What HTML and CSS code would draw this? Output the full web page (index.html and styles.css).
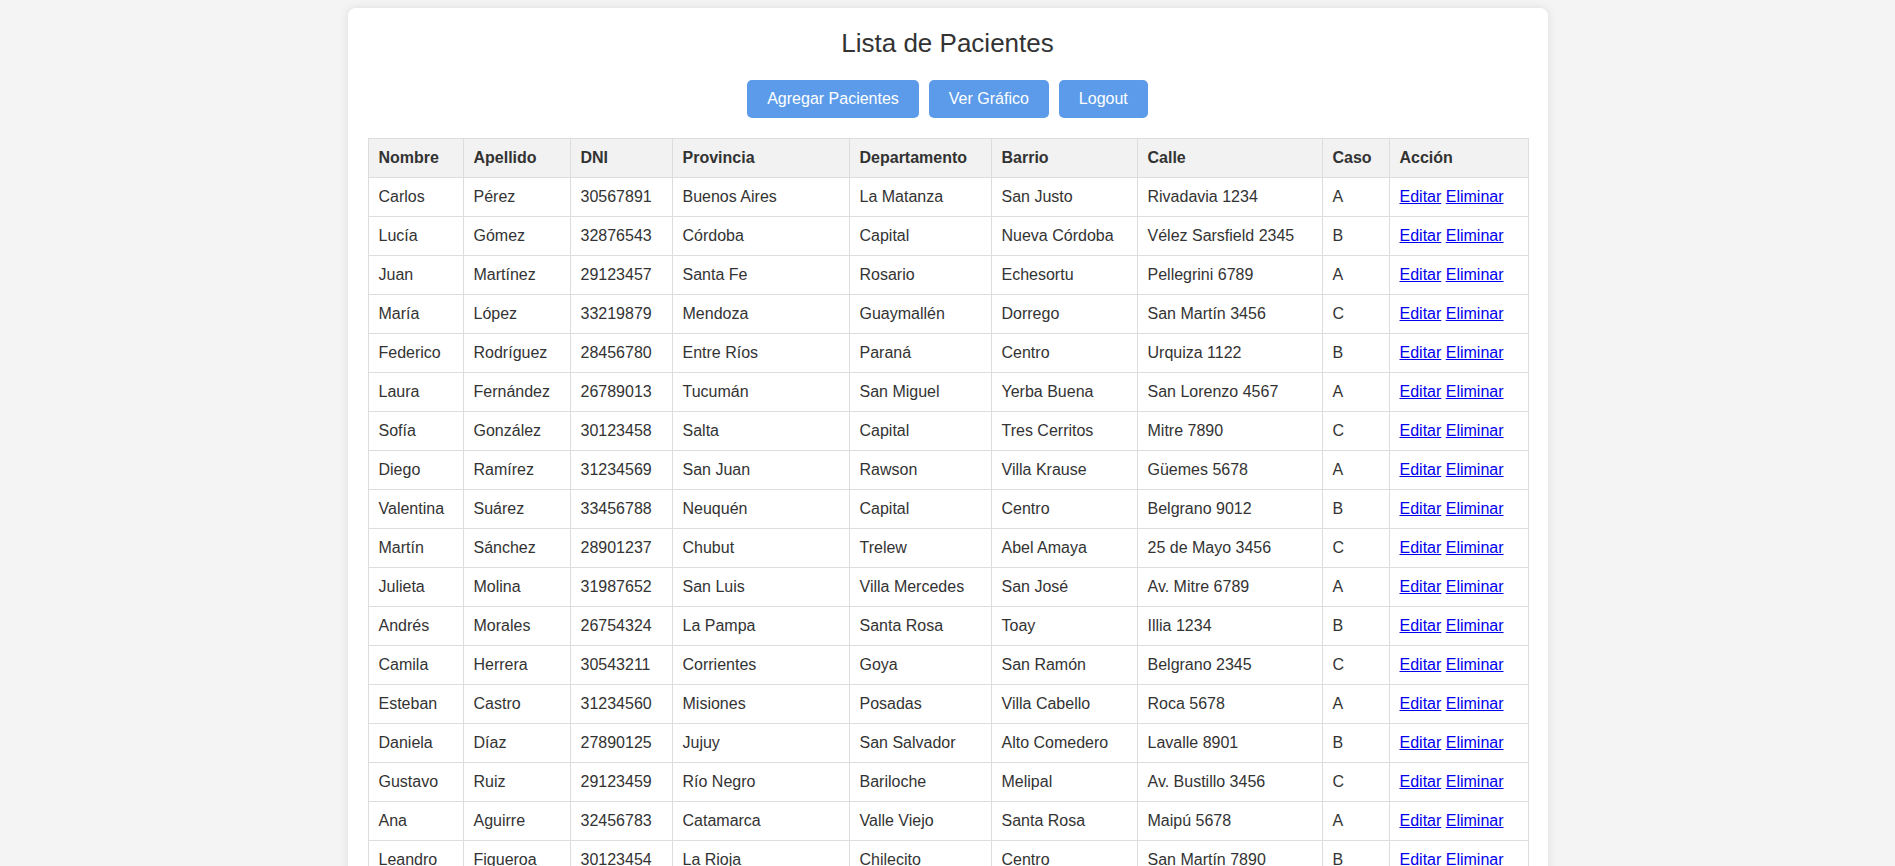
FILE: index.html
```html
<!DOCTYPE html>
<html lang="es">
<head>
<meta charset="utf-8">
<title>Lista de Pacientes</title>
<link rel="stylesheet" href="styles.css">
</head>
<body>
<div class="container">
  <h2 class="title">Lista de Pacientes</h2>
  <div class="actions">
    <button class="btn">Agregar Pacientes</button>
    <button class="btn">Ver Gráfico</button>
    <button class="btn">Logout</button>
  </div>
  <table class="patients">
    <colgroup>
      <col class="c-nombre"><col class="c-apellido"><col class="c-dni"><col class="c-prov"><col class="c-depto"><col class="c-barrio"><col class="c-calle"><col class="c-caso"><col class="c-accion">
    </colgroup>
    <thead>
      <tr><th>Nombre</th><th>Apellido</th><th>DNI</th><th>Provincia</th><th>Departamento</th><th>Barrio</th><th>Calle</th><th>Caso</th><th>Acción</th></tr>
    </thead>
    <tbody>
      <tr><td>Carlos</td><td>Pérez</td><td>30567891</td><td>Buenos Aires</td><td>La Matanza</td><td>San Justo</td><td>Rivadavia 1234</td><td>A</td><td><a href="#">Editar</a> <a href="#">Eliminar</a></td></tr>
      <tr><td>Lucía</td><td>Gómez</td><td>32876543</td><td>Córdoba</td><td>Capital</td><td>Nueva Córdoba</td><td>Vélez Sarsfield 2345</td><td>B</td><td><a href="#">Editar</a> <a href="#">Eliminar</a></td></tr>
      <tr><td>Juan</td><td>Martínez</td><td>29123457</td><td>Santa Fe</td><td>Rosario</td><td>Echesortu</td><td>Pellegrini 6789</td><td>A</td><td><a href="#">Editar</a> <a href="#">Eliminar</a></td></tr>
      <tr><td>María</td><td>López</td><td>33219879</td><td>Mendoza</td><td>Guaymallén</td><td>Dorrego</td><td>San Martín 3456</td><td>C</td><td><a href="#">Editar</a> <a href="#">Eliminar</a></td></tr>
      <tr><td>Federico</td><td>Rodríguez</td><td>28456780</td><td>Entre Ríos</td><td>Paraná</td><td>Centro</td><td>Urquiza 1122</td><td>B</td><td><a href="#">Editar</a> <a href="#">Eliminar</a></td></tr>
      <tr><td>Laura</td><td>Fernández</td><td>26789013</td><td>Tucumán</td><td>San Miguel</td><td>Yerba Buena</td><td>San Lorenzo 4567</td><td>A</td><td><a href="#">Editar</a> <a href="#">Eliminar</a></td></tr>
      <tr><td>Sofía</td><td>González</td><td>30123458</td><td>Salta</td><td>Capital</td><td>Tres Cerritos</td><td>Mitre 7890</td><td>C</td><td><a href="#">Editar</a> <a href="#">Eliminar</a></td></tr>
      <tr><td>Diego</td><td>Ramírez</td><td>31234569</td><td>San Juan</td><td>Rawson</td><td>Villa Krause</td><td>Güemes 5678</td><td>A</td><td><a href="#">Editar</a> <a href="#">Eliminar</a></td></tr>
      <tr><td>Valentina</td><td>Suárez</td><td>33456788</td><td>Neuquén</td><td>Capital</td><td>Centro</td><td>Belgrano 9012</td><td>B</td><td><a href="#">Editar</a> <a href="#">Eliminar</a></td></tr>
      <tr><td>Martín</td><td>Sánchez</td><td>28901237</td><td>Chubut</td><td>Trelew</td><td>Abel Amaya</td><td>25 de Mayo 3456</td><td>C</td><td><a href="#">Editar</a> <a href="#">Eliminar</a></td></tr>
      <tr><td>Julieta</td><td>Molina</td><td>31987652</td><td>San Luis</td><td>Villa Mercedes</td><td>San José</td><td>Av. Mitre 6789</td><td>A</td><td><a href="#">Editar</a> <a href="#">Eliminar</a></td></tr>
      <tr><td>Andrés</td><td>Morales</td><td>26754324</td><td>La Pampa</td><td>Santa Rosa</td><td>Toay</td><td>Illia 1234</td><td>B</td><td><a href="#">Editar</a> <a href="#">Eliminar</a></td></tr>
      <tr><td>Camila</td><td>Herrera</td><td>30543211</td><td>Corrientes</td><td>Goya</td><td>San Ramón</td><td>Belgrano 2345</td><td>C</td><td><a href="#">Editar</a> <a href="#">Eliminar</a></td></tr>
      <tr><td>Esteban</td><td>Castro</td><td>31234560</td><td>Misiones</td><td>Posadas</td><td>Villa Cabello</td><td>Roca 5678</td><td>A</td><td><a href="#">Editar</a> <a href="#">Eliminar</a></td></tr>
      <tr><td>Daniela</td><td>Díaz</td><td>27890125</td><td>Jujuy</td><td>San Salvador</td><td>Alto Comedero</td><td>Lavalle 8901</td><td>B</td><td><a href="#">Editar</a> <a href="#">Eliminar</a></td></tr>
      <tr><td>Gustavo</td><td>Ruiz</td><td>29123459</td><td>Río Negro</td><td>Bariloche</td><td>Melipal</td><td>Av. Bustillo 3456</td><td>C</td><td><a href="#">Editar</a> <a href="#">Eliminar</a></td></tr>
      <tr><td>Ana</td><td>Aguirre</td><td>32456783</td><td>Catamarca</td><td>Valle Viejo</td><td>Santa Rosa</td><td>Maipú 5678</td><td>A</td><td><a href="#">Editar</a> <a href="#">Eliminar</a></td></tr>
      <tr><td>Leandro</td><td>Figueroa</td><td>30123454</td><td>La Rioja</td><td>Chilecito</td><td>Centro</td><td>San Martín 7890</td><td>B</td><td><a href="#">Editar</a> <a href="#">Eliminar</a></td></tr>
    </tbody>
  </table>
</div>
</body>
</html>
```

FILE: styles.css
```css
html, body {
  margin: 0;
  padding: 0;
}

body {
  background: #f4f4f4;
  font-family: "Liberation Sans", Arial, sans-serif;
  color: #333;
  padding: 8px 0;
}

.container {
  width: 1200px;
  box-sizing: border-box;
  margin: 0 auto;
  padding: 20px;
  background: #fff;
  border-radius: 8px;
  box-shadow: 0 0 10px rgba(0, 0, 0, 0.1);
}

.title {
  margin: 0 0 21px;
  font-size: 26px;
  font-weight: normal;
  text-align: center;
  color: #333;
}

.actions {
  display: flex;
  justify-content: center;
  gap: 10px;
  margin-bottom: 20px;
}

.btn {
  font-family: "Liberation Sans", Arial, sans-serif;
  font-size: 16px;
  color: #fff;
  background: #5b9bea;
  border: none;
  border-radius: 5px;
  padding: 10px 20px;
  line-height: normal;
  cursor: pointer;
}

.patients {
  width: 100%;
  border-collapse: collapse;
  table-layout: fixed;
  font-size: 16px;
}

.patients th,
.patients td {
  border: 1px solid #ddd;
  padding: 10px;
  text-align: left;
  white-space: nowrap;
}

.patients th {
  background: #f2f2f2;
  font-weight: bold;
}

.patients a {
  color: #0000ee;
}

.c-nombre { width: 95px; }
.c-apellido { width: 107px; }
.c-dni { width: 102px; }
.c-prov { width: 177px; }
.c-depto { width: 142px; }
.c-barrio { width: 146px; }
.c-calle { width: 185px; }
.c-caso { width: 67px; }
.c-accion { width: 139px; }
```
